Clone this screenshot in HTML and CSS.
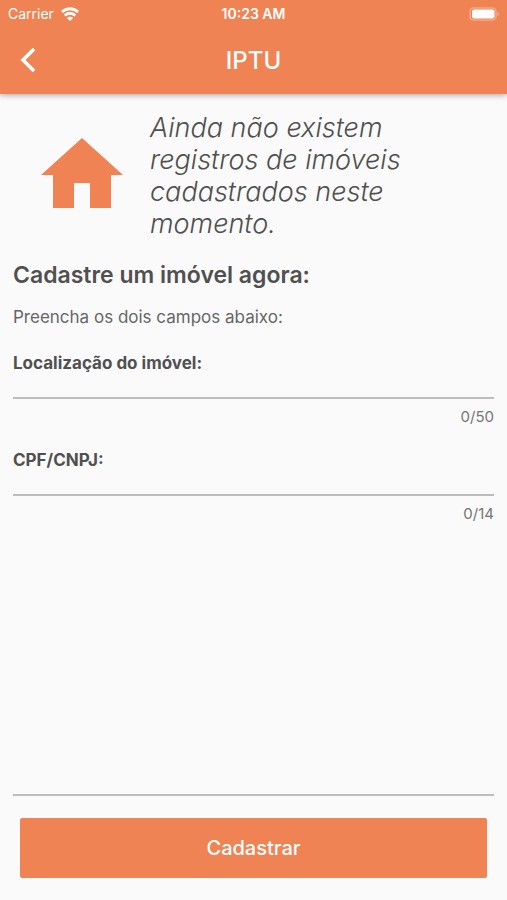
FILE: index.html
```html
<!DOCTYPE html>
<html lang="pt-BR">
<head>
    <meta charset="utf-8">
    <title>IPTU</title>
    <meta name="viewport" content="width=device-width, initial-scale=1.0">
    <link rel="stylesheet" href="styles.css">
</head>
<body>
    <header>
        <div class="status">
            <div class="carrier">
                <span>Carrier</span>
                <svg width="18" height="14" viewBox="0 0 18 14" fill="none" stroke="#fff" stroke-width="2.8">
                    <path d="M1 5a11.5 11.5 0 0 1 16 0"/>
                    <path d="M3.800 8.500a7.500 7.500 0 0 1 10.400 0"/>
                    <path d="M9 14 6 11a4.200 4.200 0 0 1 6 0z" fill="#fff" stroke="none"/>
                </svg>
            </div>
            <b>10:23 AM</b>
            <div class="battery">
                <svg width="30" height="14" viewBox="0 0 30 14">
                    <rect x="1" y="1" width="26" height="12" rx="3.5" fill="none" stroke="#fff" stroke-opacity="0.3" stroke-width="1.5"/>
                    <rect x="3" y="2.5" width="22.5" height="9" rx="2" fill="#fff"/>
                    <path d="M28.500 5v4q1.500-.5 1.500-2t-1.500-2z" fill="#fff" fill-opacity="0.4"/>
                </svg>
            </div>
        </div>
        <nav>
            <button class="back" type="button" aria-label="Voltar">
                <svg width="16" height="26" viewBox="0 0 16 26" fill="none" stroke="#fff" stroke-width="3.6">
                    <path d="M14 1 3 12l11 11"/>
                </svg>
            </button>
            <h1>IPTU</h1>
        </nav>
    </header>

    <main>
        <section class="intro">
            <div class="icon">
                <svg width="82" height="70" viewBox="0 0 82 70">
                    <path d="M41 0 82 37H70V70H49V45H33V70H12V37H0z" fill="#f08354"/>
                </svg>
            </div>
            <p>Ainda não existem registros de imóveis cadastrados neste momento.</p>
        </section>

        <form>
            <h2>Cadastre um imóvel agora:</h2>
            <p class="hint">Preencha os dois campos abaixo:</p>

            <div class="field">
                <label for="local">Localização do imóvel:</label>
                <input type="text" id="local" maxlength="50">
                <span class="counter">0/50</span>
            </div>
            <div class="field">
                <label for="doc">CPF/CNPJ:</label>
                <input type="text" id="doc" maxlength="14">
                <span class="counter">0/14</span>
            </div>

            <div class="actions">
                <button class="submit" type="submit">Cadastrar</button>
            </div>
        </form>
    </main>
</body>
</html>
```
FILE: styles.css
```css
* {
    margin: 0;
    padding: 0;
    box-sizing: border-box;
}

body {
    min-height: 100vh;
    display: flex;
    flex-direction: column;
    font-family: Inter, "Liberation Sans", sans-serif;
    background-color: #fafafa;
    color: #505050;
}

svg {
    display: block;
}

header {
    background-color: #f08354;
    color: #fff;
    box-shadow: 0 1px 6px rgba(0, 0, 0, 0.35);
}

/* status bar */
.status {
    display: grid;
    grid-template-columns: 1fr auto 1fr;
    align-items: center;
    height: 27px;
    padding: 0 8px;
    font-size: 14px;
}

.status b {
    font-weight: 600;
}

.carrier {
    display: flex;
    align-items: center;
    gap: 7px;
}

.battery {
    justify-self: end;
}

nav {
    display: grid;
    grid-template-columns: 56px 1fr 56px;
    align-items: center;
    height: 67px;
}

.back {
    justify-self: center;
    padding: 8px;
    border: none;
    background: none;
}

h1 {
    font-size: 24px;
    font-weight: 500;
    text-align: center;
}

main {
    flex: 1;
    display: flex;
    flex-direction: column;
    padding: 18px 13px 22px;
}

.intro {
    display: grid;
    grid-template-columns: 137px 1fr;
    align-items: center;
    margin-bottom: 19px;
}

.icon {
    display: flex;
    justify-content: center;
    padding-bottom: 6px;
}

.intro p {
    max-width: 290px;
    font-size: 27px;
    font-weight: 300;
    font-style: italic;
    line-height: 32px;
}

form {
    flex: 1;
    display: flex;
    flex-direction: column;
}

h2 {
    font-size: 23px;
    font-weight: 600;
    line-height: 32px;
}

.hint {
    margin: 16px 0;
    font-size: 17px;
    line-height: 20px;
    color: #666;
}

.field {
    display: flex;
    flex-direction: column;
    padding-top: 10px;
    margin-bottom: 13px;
}

label {
    font-size: 17px;
    font-weight: 700;
    line-height: 20px;
}

input {
    height: 26px;
    border: none;
    border-bottom: 2px solid #bdbdbd;
    background: none;
    font: inherit;
    font-size: 17px;
    outline: none;
}

.counter {
    padding-top: 8px;
    font-size: 15px;
    line-height: 20px;
    text-align: right;
    color: #757575;
}

.actions {
    margin-top: auto;
    padding: 22px 7px 0;
    border-top: 2px solid #bdbdbd;
}

.submit {
    width: 100%;
    height: 60px;
    border: none;
    border-radius: 2px;
    background-color: #f08354;
    color: #fff;
    font-family: inherit;
    font-size: 20px;
    font-weight: 500;
}
```
